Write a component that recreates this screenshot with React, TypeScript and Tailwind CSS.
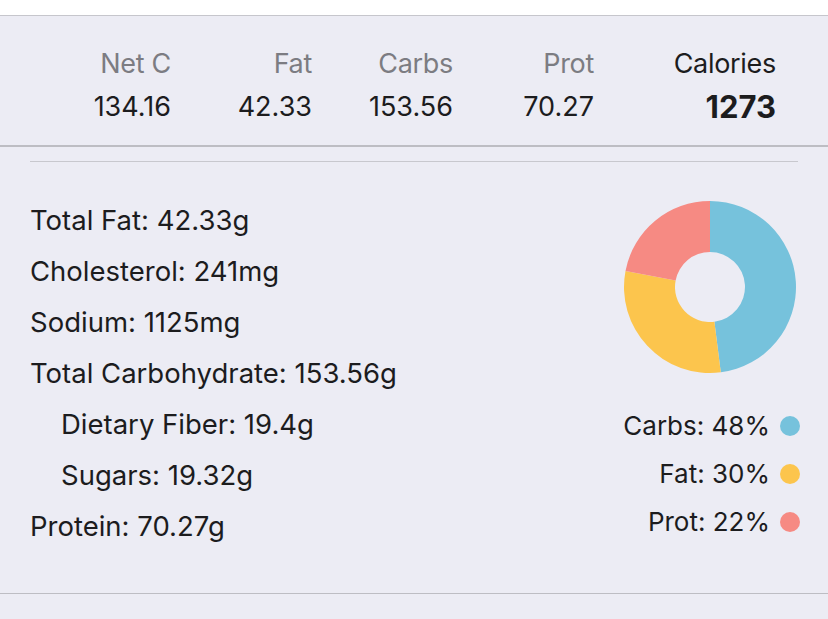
import React from "react";

const header = [
  { label: "Net C", value: "134.16" },
  { label: "Fat", value: "42.33" },
  { label: "Carbs", value: "153.56" },
  { label: "Prot", value: "70.27" },
];

const rows = [
  { text: "Total Fat: 42.33g", indent: false },
  { text: "Cholesterol: 241mg", indent: false },
  { text: "Sodium: 1125mg", indent: false },
  { text: "Total Carbohydrate: 153.56g", indent: false },
  { text: "Dietary Fiber: 19.4g", indent: true },
  { text: "Sugars: 19.32g", indent: true },
  { text: "Protein: 70.27g", indent: false },
];

const slices = [
  { label: "Carbs", pct: 48, color: "#76c2dc" },
  { label: "Fat", pct: 30, color: "#fcc54d" },
  { label: "Prot", pct: 22, color: "#f68a83" },
];

function Donut() {
  const cx = 87;
  const cy = 87;
  const r = 86;
  const ir = 35;
  let start = 0;
  const pt = (rad: number, a: number) => {
    const t = (a / 100) * Math.PI * 2 - Math.PI / 2;
    return [cx + rad * Math.cos(t), cy + rad * Math.sin(t)];
  };
  return (
    <svg width="174" height="174" viewBox="0 0 174 174">
      {slices.map((s) => {
        const end = start + s.pct;
        const large = s.pct > 50 ? 1 : 0;
        const [x1, y1] = pt(r, start);
        const [x2, y2] = pt(r, end);
        const [x3, y3] = pt(ir, end);
        const [x4, y4] = pt(ir, start);
        const d = `M${x1} ${y1} A${r} ${r} 0 ${large} 1 ${x2} ${y2} L${x3} ${y3} A${ir} ${ir} 0 ${large} 0 ${x4} ${y4} Z`;
        start = end;
        return <path key={s.label} d={d} fill={s.color} />;
      })}
    </svg>
  );
}

export default function App() {
  return (
    <div
      className="w-[828px] h-[619px] overflow-hidden bg-[#ececf4] text-[#1c1c1e]"
      style={{ fontFamily: "Inter, 'Noto Sans', sans-serif" }}
    >
      <div className="h-4 bg-white border-b border-[#c6c6cc]" />

      {/* macro totals */}
      <div className="h-[131px] flex items-start pt-[34px] border-b-2 border-[#bdbdc3]">
        {header.map((h, i) => (
          <div
            key={h.label}
            className={`flex flex-col items-end ${i === 0 ? "w-[171px]" : "w-[141px]"}`}
          >
            <span className="text-[27px] leading-[28px] text-[#7c7c82] tracking-[-0.3px]">{h.label}</span>
            <span className="text-[27px] leading-[28px] mt-[15px] tracking-[0px]">{h.value}</span>
          </div>
        ))}
        <div className="flex flex-col items-end w-[182px]">
          <span className="text-[27px] leading-[28px] tracking-[-0.3px]">Calories</span>
          <span className="text-[31px] leading-[28px] mt-[15px] font-bold">1273</span>
        </div>
      </div>

      <div className="px-[30px] pt-[14px]">
        <div className="h-px bg-[#c8c8ce]" />
        <div className="flex justify-between pt-[43px]">
          <div className="flex flex-col gap-[21px]">
            {rows.map((r) => (
              <div
                key={r.text}
                className={`text-[27.5px] leading-[30px] ${r.indent ? "pl-[31px]" : ""}`}
              >
                {r.text}
              </div>
            ))}
          </div>
          <div className="flex flex-col items-end -mr-[2px] -mt-[5px]">
            <div className="mr-[3px]">
              <Donut />
            </div>
            <div className="flex flex-col items-end gap-[18px] mt-[37px]">
              {slices.map((s) => (
                <div key={s.label} className="flex items-center gap-[10px]">
                  <span className="text-[26px] leading-[30px]">
                    {s.label}: {s.pct}%
                  </span>
                  <span
                    className="w-[20px] h-[20px] rounded-full"
                    style={{ backgroundColor: s.color }}
                  />
                </div>
              ))}
            </div>
          </div>
        </div>
      </div>

      <div className="mt-[52px] h-px bg-[#bdbdc3]" />
    </div>
  );
}
